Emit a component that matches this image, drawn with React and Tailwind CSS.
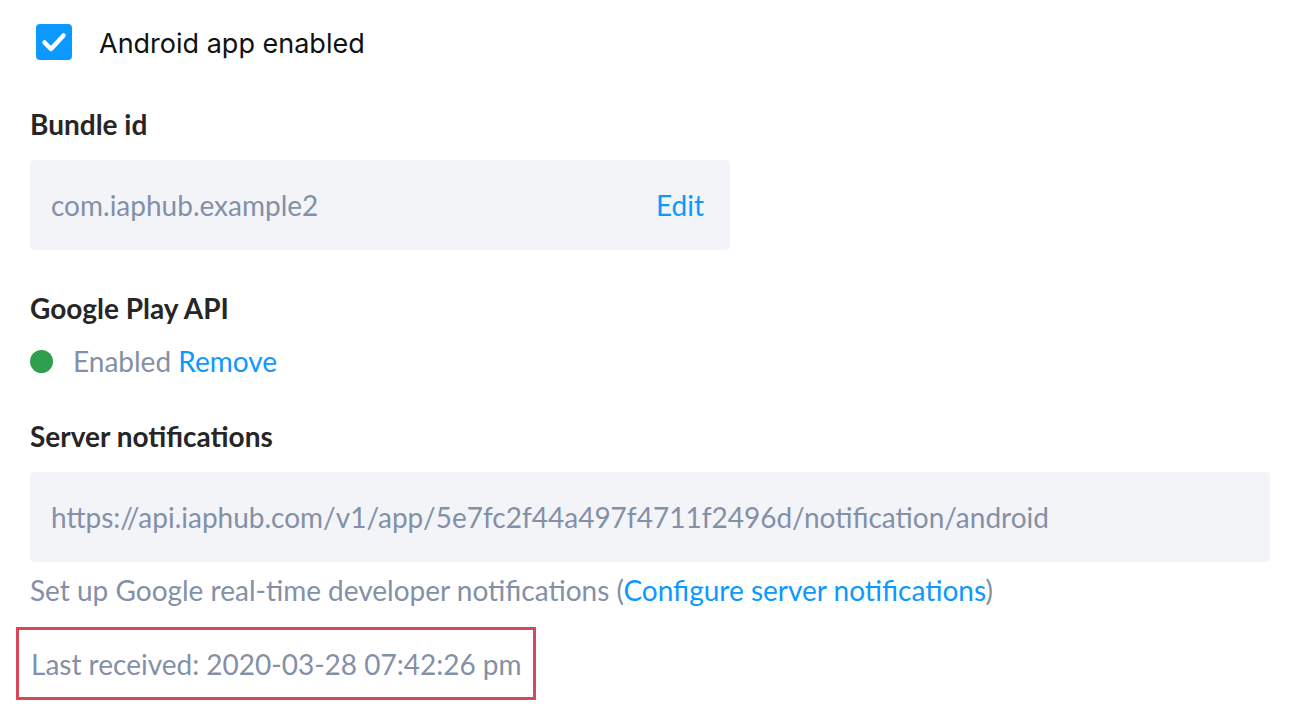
import React from 'react';

const lato = "font-['Lato',_'Liberation_Sans',_sans-serif]";

function Label({ children, className = '' }) {
  return (
    <div className={`h-[30px] leading-[28px] text-[28px] font-bold text-[#262626] ${className}`}>
      {children}
    </div>
  );
}

export default function App() {
  return (
    <div className={`${lato} bg-white min-h-[720px] pl-[30px] pr-[20px] pt-[24px]`}>
      <div className="flex items-center h-[36px]">
        <div className="ml-[6px] w-[36px] h-[36px] rounded-[4px] bg-[#0b99ff] flex items-center justify-center">
          <svg width="36" height="36" viewBox="0 0 36 36" fill="none">
            <path d="M8.5 18.5 L15 25 L27.5 11.5" stroke="white" strokeWidth="4.5" strokeLinecap="round" strokeLinejoin="round" />
          </svg>
        </div>
        <span className="ml-[27px] text-[27px] text-[#111] font-['Inter',_sans-serif] leading-[36px] pt-[3px]">
          Android app enabled
        </span>
      </div>

      <Label className="mt-[50px]">Bundle id</Label>
      <div className="mt-[20px] w-[700px] h-[90px] rounded-[4px] bg-[#f3f4f8] flex items-center justify-between pl-[21px] pr-[26px] text-[28px]">
        <span className="text-[#8390a7]">com.iaphub.example2</span>
        <span className="text-[#0b99ff]">Edit</span>
      </div>

      <Label className="mt-[44px]">Google Play API</Label>
      <div className="mt-[22px] h-[30px] flex items-center text-[28px]">
        <span className="w-[23px] h-[23px] rounded-full bg-[#2f9e4f]" />
        <span className="ml-[20px] text-[#8390a7] whitespace-pre">
          Enabled <span className="text-[#0b99ff]">Remove</span>
        </span>
      </div>

      <Label className="mt-[46px]">Server notifications</Label>
      <div className="mt-[20px] h-[90px] rounded-[4px] bg-[#f3f4f8] flex items-center pl-[21px] text-[28px] text-[#8390a7]">
        https://api.iaphub.com/v1/app/5e7fc2f44a497f4711f2496d/notification/android
      </div>

      <div className="mt-[13px] h-[30px] leading-[30px] text-[28px] text-[#8390a7]">
        Set up Google real-time developer notifications (
        <span className="text-[#0b99ff]">Configure server notifications</span>)
      </div>

      <div className="mt-[22px] -ml-[14px] w-[520px] h-[73px] border-[3px] border-[#d8475c] flex items-center pl-[12px] text-[28px] text-[#8390a7]">
        Last received: 2020-03-28 07:42:26 pm
      </div>
    </div>
  );
}
